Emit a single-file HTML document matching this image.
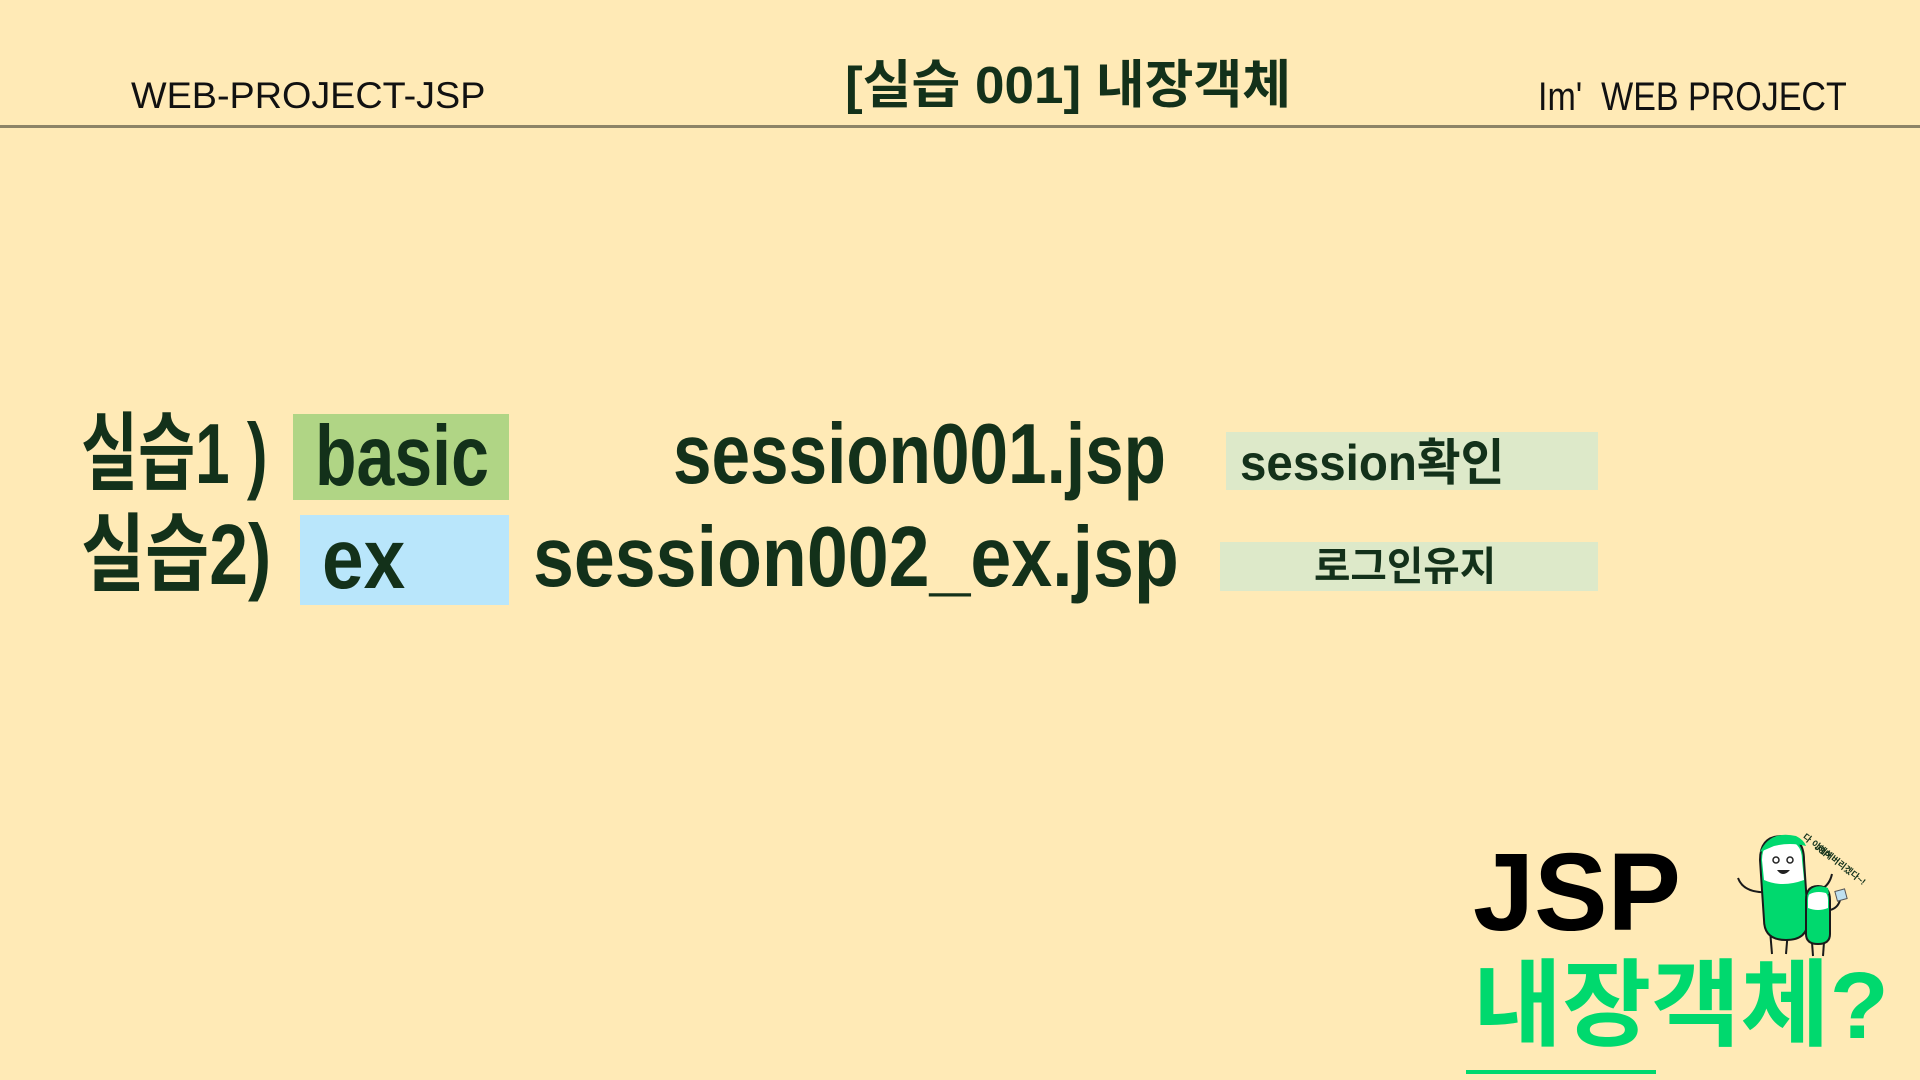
<!DOCTYPE html>
<html><head><meta charset="utf-8"><style>
html,body{margin:0;padding:0}
body{width:1920px;height:1080px;background:#ffeab6;position:relative;overflow:hidden;font-family:"Liberation Sans","Noto Sans CJK KR",sans-serif;color:#13311a}
.t{position:absolute;white-space:nowrap;line-height:1;transform-origin:left top}
.b{font-weight:bold}
.box{position:absolute}
</style></head><body>
<div class="t" style="left:131px;top:77px;font-size:37px;color:#111;transform:scaleX(1.02)">WEB-PROJECT-JSP</div>
<div class="t b" style="left:845px;top:60px;font-size:52px;transform:scaleX(1.02)">[실습 001] 내장객체</div>
<div class="t" style="left:1538px;top:77px;font-size:40px;color:#111;transform:scaleX(.85)">Im'&nbsp; WEB PROJECT</div>
<div class="box" style="left:0;top:125px;width:1920px;height:3px;background:#8d8467"></div>

<div class="box" style="left:293px;top:414px;width:216px;height:86px;background:#b0d585"></div>
<div class="box" style="left:300px;top:515px;width:209px;height:90px;background:#b9e6fb"></div>
<div class="box" style="left:1226px;top:432px;width:372px;height:58px;background:#dde9c9"></div>
<div class="box" style="left:1220px;top:542px;width:378px;height:49px;background:#dde9c9"></div>

<div class="t b" style="left:81px;top:412px;font-size:85px;transform:scaleX(.73)">실습1 )</div>
<div class="t b" style="left:315px;top:414px;font-size:85px;transform:scaleX(.8)">basic</div>
<div class="t b" style="left:673px;top:412px;font-size:85px;transform:scaleX(.815)">session001.jsp</div>
<div class="t b" style="left:1240px;top:438px;font-size:50px;transform:scaleX(.95)">session확인</div>

<div class="t b" style="left:81px;top:513px;font-size:85px;transform:scaleX(.82)">실습2)</div>
<div class="t b" style="left:322px;top:517px;font-size:85px;transform:scaleX(.88)">ex</div>
<div class="t b" style="left:533px;top:515px;font-size:85px;transform:scaleX(.865)">session002_ex.jsp</div>
<div class="t b" style="left:1314px;top:547px;font-size:40px;transform:scaleX(.99)">로그인유지</div>

<div class="t b" style="left:1473px;top:838px;font-size:110px;color:#000">JSP</div>
<div class="t b" style="left:1473px;top:959px;font-size:95px;color:#00d96e;transform:scaleX(1.02)">내장객체?</div>
<div class="box" style="left:1466px;top:1070px;width:190px;height:4px;background:#00d96e"></div>

<svg style="position:absolute;left:1730px;top:830px" width="160" height="130" viewBox="0 0 160 130">
 <g stroke="#1a1a1a" stroke-width="2" fill="none">
  <path d="M8 48 Q14 64 40 62"/><path d="M78 62 Q98 62 102 44"/>
  <line x1="40" y1="100" x2="42" y2="124"/><line x1="58" y1="100" x2="56" y2="124"/>
  <line x1="82" y1="112" x2="83" y2="126"/><line x1="94" y1="112" x2="93" y2="126"/>
  <path d="M100 80 Q108 78 110 70"/>
 </g>
 <path d="M30 30 Q30 6 52 6 Q74 6 74 30 L78 90 Q78 110 56 110 Q34 110 34 90 Z" fill="#00d96e" stroke="#1a1a1a" stroke-width="2"/>
 <path d="M32 30 Q32 10 52 10 Q72 10 72 30 L74 50 Q52 58 34 50 Z" fill="#fff"/>
 <path d="M30 22 Q40 0 66 6 Q74 10 76 16 Q60 12 44 16 Z" fill="#00d96e"/>
 <circle cx="46" cy="30" r="3" fill="none" stroke="#222" stroke-width="1.5"/><circle cx="60" cy="30" r="3" fill="none" stroke="#222" stroke-width="1.5"/>
 <path d="M47 40 Q53 48 60 40 Z" fill="#222"/>
 <path d="M76 70 Q76 56 88 56 Q100 56 100 70 L100 104 Q100 114 88 114 Q76 114 76 104 Z" fill="#00d96e" stroke="#1a1a1a" stroke-width="2"/>
 <path d="M78 70 Q78 60 88 60 Q98 60 98 70 L98 78 Q88 82 78 78 Z" fill="#fff"/>
 <path d="M77 66 Q82 52 98 58 L99 64 Q88 60 80 64 Z" fill="#00d96e"/>
 <rect x="106" y="60" width="10" height="10" fill="#bfe0f0" stroke="#555" transform="rotate(-15 111 65)"/>
 <g fill="#13311a" font-size="9" font-weight="bold" font-family="Liberation Sans,Noto Sans CJK KR,sans-serif">
  <text x="84" y="18" transform="rotate(40 84 18)">JSP</text>
  <text x="72" y="8" transform="rotate(38 72 8)">다 이해해버리겠다~!</text>
 </g>
</svg>
</body></html>
